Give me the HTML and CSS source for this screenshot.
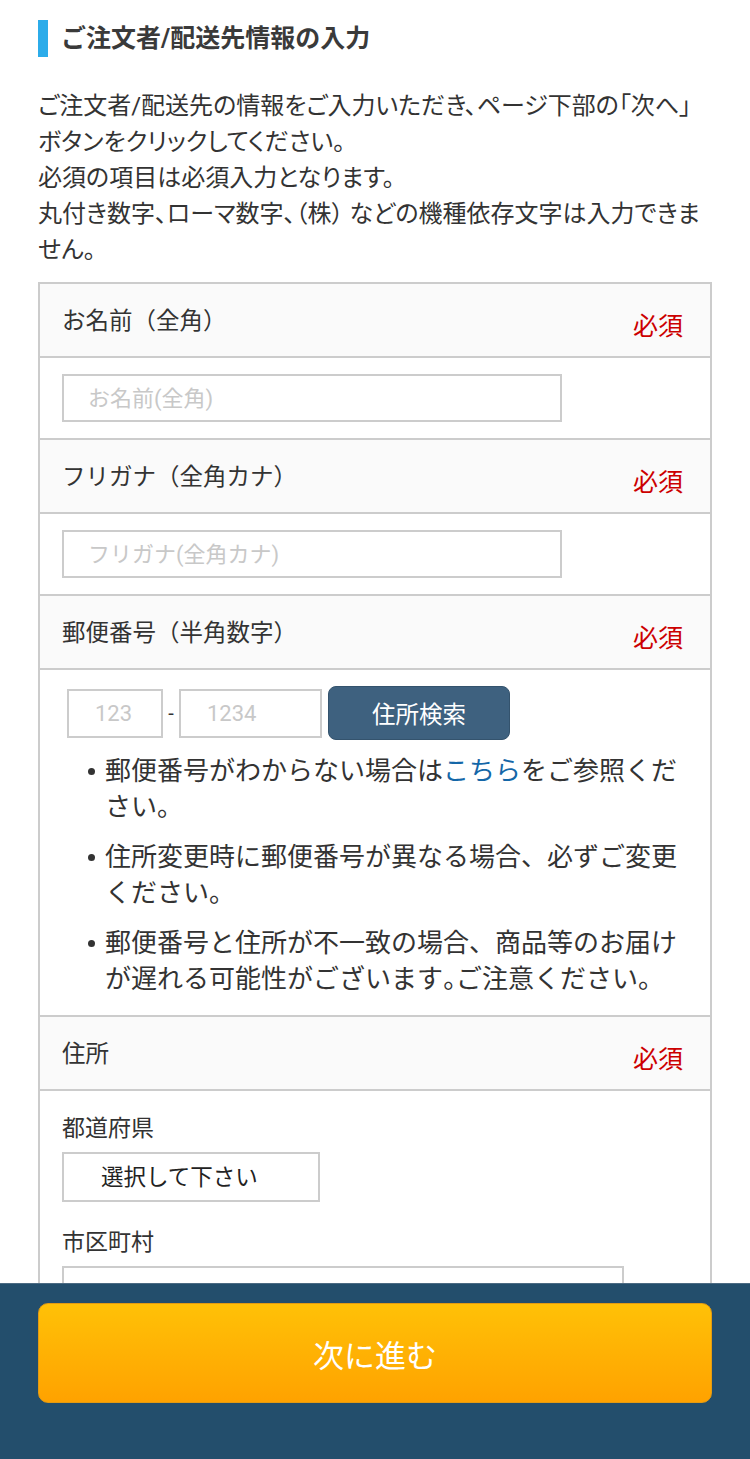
FILE: index.html
```html
<!DOCTYPE html>
<html lang="ja">
<head>
<meta charset="utf-8">
<title>ご注文者/配送先情報の入力</title>
<link rel="stylesheet" href="styles.css">
</head>
<body>
<main class="wrap">
  <h1 class="title">ご注文者/配送先情報の入力</h1>
  <p class="lead">ご注文者/配送先の情報をご入力いただき、ページ下部の「次へ」<br>ボタンをクリックしてください。<br>必須の項目は必須入力となります。<br>丸付き数字、ローマ数字、（株） などの機種依存文字は入力できません。</p>

  <div class="form">
    <div class="head"><span class="label">お名前（全角）</span><span class="req">必須</span></div>
    <div class="body"><input class="text wide" type="text" placeholder="お名前(全角)"></div>

    <div class="head"><span class="label">フリガナ（全角カナ）</span><span class="req">必須</span></div>
    <div class="body"><input class="text wide" type="text" placeholder="フリガナ(全角カナ)"></div>

    <div class="head"><span class="label">郵便番号（半角数字）</span><span class="req">必須</span></div>
    <div class="body postal">
      <div class="zip">
        <input class="text zip1" type="text" placeholder="123">
        <span class="dash">-</span>
        <input class="text zip2" type="text" placeholder="1234">
        <button class="search" type="button">住所検索</button>
      </div>
      <ul class="notes">
        <li><span>郵便番号がわからない場合は<a href="#">こちら</a>をご参照ください。</span></li>
        <li><span>住所変更時に郵便番号が異なる場合、必ずご変更ください。</span></li>
        <li><span>郵便番号と住所が不一致の場合、商品等のお届けが遅れる可能性がございます<span class="pn">。</span>ご注意ください。</span></li>
      </ul>
    </div>

    <div class="head"><span class="label">住所</span><span class="req">必須</span></div>
    <div class="body address">
      <div class="field">
        <div class="flabel">都道府県</div>
        <div class="select">選択して下さい</div>
      </div>
      <div class="field">
        <div class="flabel">市区町村</div>
        <input class="text city" type="text">
      </div>
      <div class="field">
        <div class="flabel">番地・建物名</div>
        <input class="text city" type="text">
      </div>
    </div>
  </div>
</main>

<div class="footer">
  <button class="next" type="button">次に進む</button>
</div>
</body>
</html>
```

FILE: styles.css
```css
* { box-sizing: border-box; }

html, body {
  margin: 0;
  padding: 0;
  background: #fff;
}

body {
  font-family: Roboto, "Noto Sans CJK JP", sans-serif;
  color: #333;
}

.wrap {
  padding: 20px 38px 220px;
}

.title {
  margin: 0;
  height: 37px;
  line-height: 37px;
  border-left: 10px solid #2cacea;
  padding-left: 13px;
  font-size: 25px;
  font-weight: bold;
  color: #3a3a3a;
}

.lead {
  margin: 31px 0 14px;
  font-size: 24px;
  line-height: 36px;
  color: #333;
  font-feature-settings: "palt";
}

.form {
  border: 2px solid #cccccc;
}

.head {
  display: flex;
  justify-content: space-between;
  align-items: center;
  height: 74px;
  padding: 0 27px 2px 22px;
  background: #fafafa;
  border-bottom: 2px solid #cccccc;
}

.label {
  font-size: 23.5px;
  color: #333;
}

.req {
  font-size: 25px;
  color: #cc0000;
  margin-top: 9px;
}

.body {
  padding: 16px 22px 16px 22px;
  border-bottom: 2px solid #cccccc;
  background: #fff;
}

.text {
  display: block;
  height: 48px;
  border: 2px solid #cccccc;
  border-radius: 0;
  background: #fff;
  font-family: Roboto, "Noto Sans CJK JP", sans-serif;
  font-size: 22px;
  color: #333;
  padding: 0 24px;
  margin: 0;
  outline: none;
}

.text::placeholder {
  color: #c8c8c8;
}

.wide {
  width: 500px;
}

.postal {
  padding: 16px 22px 18px 27px;
}

.zip {
  display: flex;
  align-items: center;
}

.zip1 {
  width: 96px;
  height: 49px;
  padding: 0 0 0 26px;
}

.zip2 {
  width: 143px;
  height: 49px;
  padding: 0 0 0 26px;
}

.dash {
  width: 16px;
  text-align: center;
  font-size: 20px;
  color: #333;
}

.search {
  margin-left: 6px;
  width: 182px;
  height: 54px;
  border: 1px solid #34536d;
  border-radius: 8px;
  background: #3e617f;
  color: #fff;
  font-family: Roboto, "Noto Sans CJK JP", sans-serif;
  font-size: 23.5px;
  padding: 0;
}

.notes {
  list-style: none;
  margin: 13px 0 0;
  padding: 0 0 0 21px;
  display: flex;
  flex-direction: column;
  gap: 14px;
}

.notes li {
  display: flex;
  font-size: 26px;
  line-height: 36px;
  color: #333;
}

.notes li::before {
  content: "";
  flex: none;
  width: 7px;
  height: 7px;
  border-radius: 50%;
  background: #333;
  margin: 15px 10px 0 0;
}

.notes .pn {
  font-feature-settings: "palt";
}

.notes a {
  color: #1467a8;
  text-decoration: none;
}

.address {
  padding: 22px 22px 20px;
  border-bottom: none;
}

.field {
  margin-bottom: 25px;
}

.flabel {
  font-size: 23px;
  line-height: 32px;
  color: #333;
  margin-bottom: 7px;
}

.select {
  width: 258px;
  height: 50px;
  line-height: 46px;
  border: 2px solid #cccccc;
  padding-left: 37px;
  font-size: 22.5px;
  color: #222;
}

.city {
  width: 562px;
  height: 50px;
}

.footer {
  position: fixed;
  left: 0;
  right: 0;
  bottom: 0;
  height: 176px;
  background: #234e6c;
  border-top: 1px solid #4c6b83;
  padding: 19px 38px 0;
}

.next {
  display: block;
  width: 100%;
  height: 100px;
  border: 1px solid #e39a12;
  border-radius: 10px;
  background: linear-gradient(#ffc107, #ffa200);
  color: #fff;
  font-family: Roboto, "Noto Sans CJK JP", sans-serif;
  font-size: 31px;
  padding: 0;
}
```
